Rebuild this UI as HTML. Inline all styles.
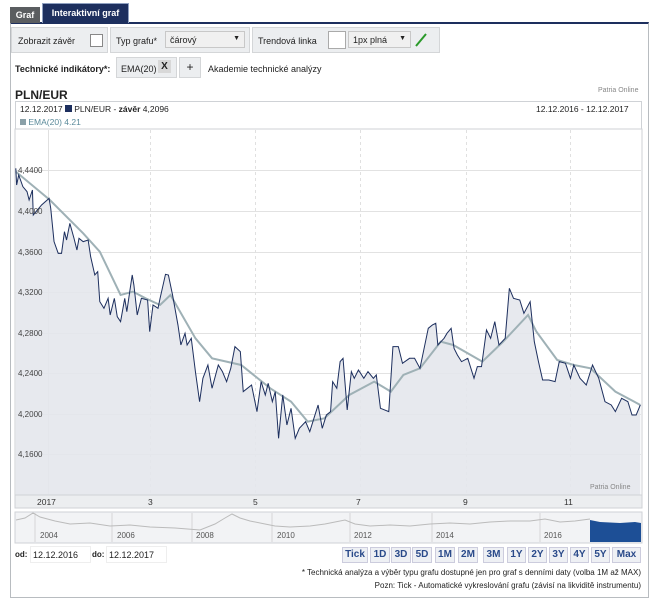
<!DOCTYPE html>
<html><head><meta charset="utf-8"><style>
*{box-sizing:border-box;margin:0;padding:0}
body{width:652px;height:600px;background:#fff;font-family:"Liberation Sans",sans-serif;font-size:9px;color:#222;position:relative;overflow:hidden}
.a{position:absolute}
.box{position:absolute;background:#eceef0;border:1px solid #d4d6d8}
.btn{position:absolute;top:547px;height:16px;border:1px solid #ccd;background:#eef0f4;color:#2a4a8a;font-weight:bold;font-size:10px;text-align:center;line-height:14px}
</style></head><body>
<div class="a" style="left:10px;top:22px;width:639px;height:576px;border:1px solid #b8bcc0;border-top:2px solid #1d2f5e"></div>
<div class="a" style="left:10px;top:7px;width:30px;height:16px;background:#5a5d60;color:#fff;font-weight:bold;font-size:9px;line-height:16px;text-align:center">Graf</div>
<div class="a" style="left:42px;top:3px;width:87px;height:20px;background:#1d2f5e;border:1px solid #8fa0c0;border-bottom:none;color:#fff;font-weight:bold;font-size:9px;line-height:19px;text-align:center">Interaktivní graf</div>

<div class="box" style="left:11px;top:27px;width:97px;height:26px"></div>
<div class="a" style="left:18px;top:36px">Zobrazit závěr</div>
<div class="a" style="left:90px;top:34px;width:13px;height:13px;background:#fff;border:1px solid #888"></div>
<div class="box" style="left:110px;top:27px;width:140px;height:26px"></div>
<div class="a" style="left:116px;top:36px">Typ grafu*</div>
<div class="a" style="left:165px;top:31px;width:80px;height:17px;background:#f0f0f0;border:1px solid #c8c8c8;padding:3px 4px">čárový<span style="float:right;font-size:7px">▼</span></div>
<div class="box" style="left:252px;top:27px;width:188px;height:26px"></div>
<div class="a" style="left:258px;top:36px">Trendová linka</div>
<div class="a" style="left:328px;top:31px;width:18px;height:18px;background:#fff;border:1px solid #aaa"></div>
<div class="a" style="left:348px;top:31px;width:63px;height:17px;background:#f0f0f0;border:1px solid #c8c8c8;padding:3px 4px">1px plná<span style="float:right;font-size:7px">▼</span></div>
<svg class="a" style="left:414px;top:32px" width="14" height="16"><line x1="2" y1="14" x2="12" y2="2" stroke="#2a9a2a" stroke-width="2"/></svg>

<div class="a" style="left:15px;top:64px;font-weight:bold">Technické indikátory*:</div>
<div class="box" style="left:116px;top:57px;width:61px;height:21px"></div>
<div class="a" style="left:121px;top:64px">EMA(20)</div>
<div class="a" style="left:158px;top:60px;width:13px;height:13px;background:#d8d8d8;font-weight:bold;font-size:10px;text-align:center;line-height:13px">X</div>
<div class="box" style="left:179px;top:57px;width:22px;height:21px;text-align:center;line-height:18px;font-size:12px">+</div>
<div class="a" style="left:208px;top:64px">Akademie technické analýzy</div>

<div class="a" style="left:15px;top:88px;font-weight:bold;font-size:12px">PLN/EUR</div>
<div class="a" style="left:598px;top:87px;font-size:7px;color:#888">Patria Online</div>
<div class="a" style="left:15px;top:101px;width:627px;height:28px;border:1px solid #cfd2d6;border-bottom:none"></div>
<div class="a" style="left:20px;top:104px;font-size:8.5px">12.12.2017 <span style="display:inline-block;width:7px;height:7px;background:#1d2f5e"></span> PLN/EUR - <b>závěr</b> 4,2096</div>
<div class="a" style="left:536px;top:104px;font-size:8.5px">12.12.2016 - 12.12.2017</div>
<div class="a" style="left:20px;top:117px;font-size:8.5px;color:#5a8a9a"><span style="display:inline-block;width:6px;height:6px;background:#8aa0a8"></span> EMA(20) 4.21</div>

<svg class="a" style="left:0;top:0" width="652" height="600">
<rect x="15" y="129" width="627" height="366" fill="#fff" stroke="#cfd2d6"/>
<g stroke="#e2e2e2" stroke-width="1">
<line x1="15" x2="641" y1="170.5" y2="170.5"/><line x1="15" x2="641" y1="211.5" y2="211.5"/><line x1="15" x2="641" y1="252.5" y2="252.5"/><line x1="15" x2="641" y1="292.5" y2="292.5"/><line x1="15" x2="641" y1="333.5" y2="333.5"/><line x1="15" x2="641" y1="373.5" y2="373.5"/><line x1="15" x2="641" y1="414.5" y2="414.5"/><line x1="15" x2="641" y1="454.5" y2="454.5"/>
</g>
<g stroke="#e0e0e0" stroke-dasharray="3,3"><line x1="150.5" x2="150.5" y1="130" y2="494"/><line x1="255.5" x2="255.5" y1="130" y2="494"/><line x1="360.5" x2="360.5" y1="130" y2="494"/><line x1="466.5" x2="466.5" y1="130" y2="494"/><line x1="570.5" x2="570.5" y1="130" y2="494"/></g>
<line x1="48.5" x2="48.5" y1="130" y2="494" stroke="#e0e0e0"/>
<g transform="translate(0,125) scale(0.4158,0.3333)">
<polygon fill="#e4e7ec" fill-opacity="0.9" points="38,1110 38,130 40,180 45,150 55,185 65,200 70,225 78,195 80,270 100,240 118,220 122,250 130,350 140,385 148,385 155,320 160,345 168,295 178,340 185,375 190,340 200,350 212,345 218,395 228,450 235,440 240,530 250,550 260,520 265,570 275,520 282,575 290,590 300,520 305,560 312,500 318,450 322,480 330,570 340,520 355,525 360,620 368,540 380,550 385,520 398,448 405,450 415,510 428,600 435,660 445,625 450,660 460,640 470,740 480,830 488,760 500,720 510,790 525,720 535,740 545,770 555,730 565,665 578,680 585,800 595,790 605,780 618,860 628,770 638,810 645,775 655,830 662,800 670,940 680,810 690,900 700,850 710,940 720,910 735,890 745,920 755,880 765,840 775,910 785,870 795,860 800,770 810,790 818,710 825,700 835,855 845,740 852,760 862,735 875,760 885,740 898,760 905,750 915,850 935,860 945,665 958,665 968,715 985,700 997,700 1010,730 1020,670 1030,610 1040,600 1048,595 1053,660 1068,640 1075,625 1085,610 1092,670 1100,690 1110,710 1125,700 1140,760 1148,725 1158,725 1170,615 1180,640 1190,590 1200,660 1215,640 1225,490 1235,520 1250,525 1260,565 1275,530 1285,650 1295,710 1305,765 1320,765 1335,770 1345,710 1360,715 1372,760 1380,720 1395,760 1410,780 1425,720 1440,760 1455,830 1470,840 1480,860 1495,820 1510,830 1520,870 1530,870 1540,840 1540,1110"/>
<polyline fill="none" stroke="#9fb1b6" stroke-width="2" vector-effect="non-scaling-stroke" points="38,140 120,225 200,325 240,380 290,510 320,500 350,520 385,540 410,510 470,640 510,700 580,720 650,790 700,830 740,890 780,880 840,810 900,770 940,800 970,750 1010,730 1060,650 1090,660 1160,710 1210,650 1270,570 1290,620 1340,705 1380,720 1420,730 1480,800 1540,840"/>
<polyline fill="none" stroke="#1d2f5e" stroke-width="1" vector-effect="non-scaling-stroke" points="38,130 40,180 45,150 55,185 65,200 70,225 78,195 80,270 100,240 118,220 122,250 130,350 140,385 148,385 155,320 160,345 168,295 178,340 185,375 190,340 200,350 212,345 218,395 228,450 235,440 240,530 250,550 260,520 265,570 275,520 282,575 290,590 300,520 305,560 312,500 318,450 322,480 330,570 340,520 355,525 360,620 368,540 380,550 385,520 398,448 405,450 415,510 428,600 435,660 445,625 450,660 460,640 470,740 480,830 488,760 500,720 510,790 525,720 535,740 545,770 555,730 565,665 578,680 585,800 595,790 605,780 618,860 628,770 638,810 645,775 655,830 662,800 670,940 680,810 690,900 700,850 710,940 720,910 735,890 745,920 755,880 765,840 775,910 785,870 795,860 800,770 810,790 818,710 825,700 835,855 845,740 852,760 862,735 875,760 885,740 898,760 905,750 915,850 935,860 945,665 958,665 968,715 985,700 997,700 1010,730 1020,670 1030,610 1040,600 1048,595 1053,660 1068,640 1075,625 1085,610 1092,670 1100,690 1110,710 1125,700 1140,760 1148,725 1158,725 1170,615 1180,640 1190,590 1200,660 1215,640 1225,490 1235,520 1250,525 1260,565 1275,530 1285,650 1295,710 1305,765 1320,765 1335,770 1345,710 1360,715 1372,760 1380,720 1395,760 1410,780 1425,720 1440,760 1455,830 1470,840 1480,860 1495,820 1510,830 1520,870 1530,870 1540,840"/>
</g>
<g font-size="8" fill="#444" font-family="Liberation Sans,sans-serif">
<text x="18" y="173">4,4400</text><text x="18" y="214">4,4000</text><text x="18" y="255">4,3600</text><text x="18" y="295">4,3200</text><text x="18" y="336">4,2800</text><text x="18" y="376">4,2400</text><text x="18" y="417">4,2000</text><text x="18" y="457">4,1600</text>
</g>
<text x="590" y="489" font-size="7" fill="#888" font-family="Liberation Sans,sans-serif">Patria Online</text>
<rect x="15" y="495" width="627" height="13" fill="#eceef0" stroke="#cfd2d6"/>
<g font-size="8.5" fill="#333" font-family="Liberation Sans,sans-serif"><text x="37" y="505">2017</text><text x="148" y="505">3</text><text x="253" y="505">5</text><text x="356" y="505">7</text><text x="463" y="505">9</text><text x="564" y="505">11</text></g>
<rect x="15" y="512" width="627" height="31" fill="#f2f3f5" stroke="#cfd2d6"/>
<g stroke="#d6d6d6"><line x1="35" x2="35" y1="513" y2="542"/><line x1="112" x2="112" y1="513" y2="542"/><line x1="192" x2="192" y1="513" y2="542"/><line x1="272" x2="272" y1="513" y2="542"/><line x1="350" x2="350" y1="513" y2="542"/><line x1="432" x2="432" y1="513" y2="542"/><line x1="540" x2="540" y1="513" y2="542"/></g>
<polyline fill="none" stroke="#bbb" points="16,520 25,518 33,513 40,517 55,521 70,524 90,523 110,526 130,525 150,527 175,528 200,530 215,524 225,518 232,514 240,518 250,521 265,524 275,526 290,527 310,526 325,524 335,522 345,520 355,524 370,526 390,525 410,526 430,524 450,523 470,524 490,522 510,521 530,521 545,519 560,522 575,521 590,519"/>
<path d="M590,520 L600,522 L620,523 L635,522 L641,523 L641,542 L590,542Z" fill="#1d4f96"/>
<g font-size="8" fill="#555" font-family="Liberation Sans,sans-serif"><text x="40" y="538">2004</text><text x="117" y="538">2006</text><text x="196" y="538">2008</text><text x="277" y="538">2010</text><text x="354" y="538">2012</text><text x="436" y="538">2014</text><text x="544" y="538">2016</text></g>
</svg>

<div class="a" style="left:15px;top:550px;font-weight:bold;font-size:8px">od:</div>
<div class="a" style="left:30px;top:546px;width:61px;height:17px;border:1px solid #eee;padding:3px 2px;font-size:9px">12.12.2016</div>
<div class="a" style="left:92px;top:550px;font-weight:bold;font-size:8px">do:</div>
<div class="a" style="left:106px;top:546px;width:61px;height:17px;border:1px solid #eee;padding:3px 2px;font-size:9px">12.12.2017</div>

<div class="btn" style="left:342px;width:26px">Tick</div>
<div class="btn" style="left:370px;width:20px">1D</div>
<div class="btn" style="left:391px;width:20px">3D</div>
<div class="btn" style="left:412px;width:20px">5D</div>
<div class="btn" style="left:435px;width:20px">1M</div>
<div class="btn" style="left:458px;width:20px">2M</div>
<div class="btn" style="left:483px;width:21px">3M</div>
<div class="btn" style="left:507px;width:19px">1Y</div>
<div class="btn" style="left:528px;width:19px">2Y</div>
<div class="btn" style="left:549px;width:19px">3Y</div>
<div class="btn" style="left:570px;width:19px">4Y</div>
<div class="btn" style="left:591px;width:19px">5Y</div>
<div class="btn" style="left:612px;width:29px">Max</div>

<div class="a" style="right:11px;top:568px;font-size:8px;text-align:right">* Technická analýza a výběr typu grafu dostupné jen pro graf s denními daty (volba 1M až MAX)</div>
<div class="a" style="right:11px;top:581px;font-size:8px;text-align:right">Pozn: Tick - Automatické vykreslování grafu (závisí na likviditě instrumentu)</div>
</body></html>
